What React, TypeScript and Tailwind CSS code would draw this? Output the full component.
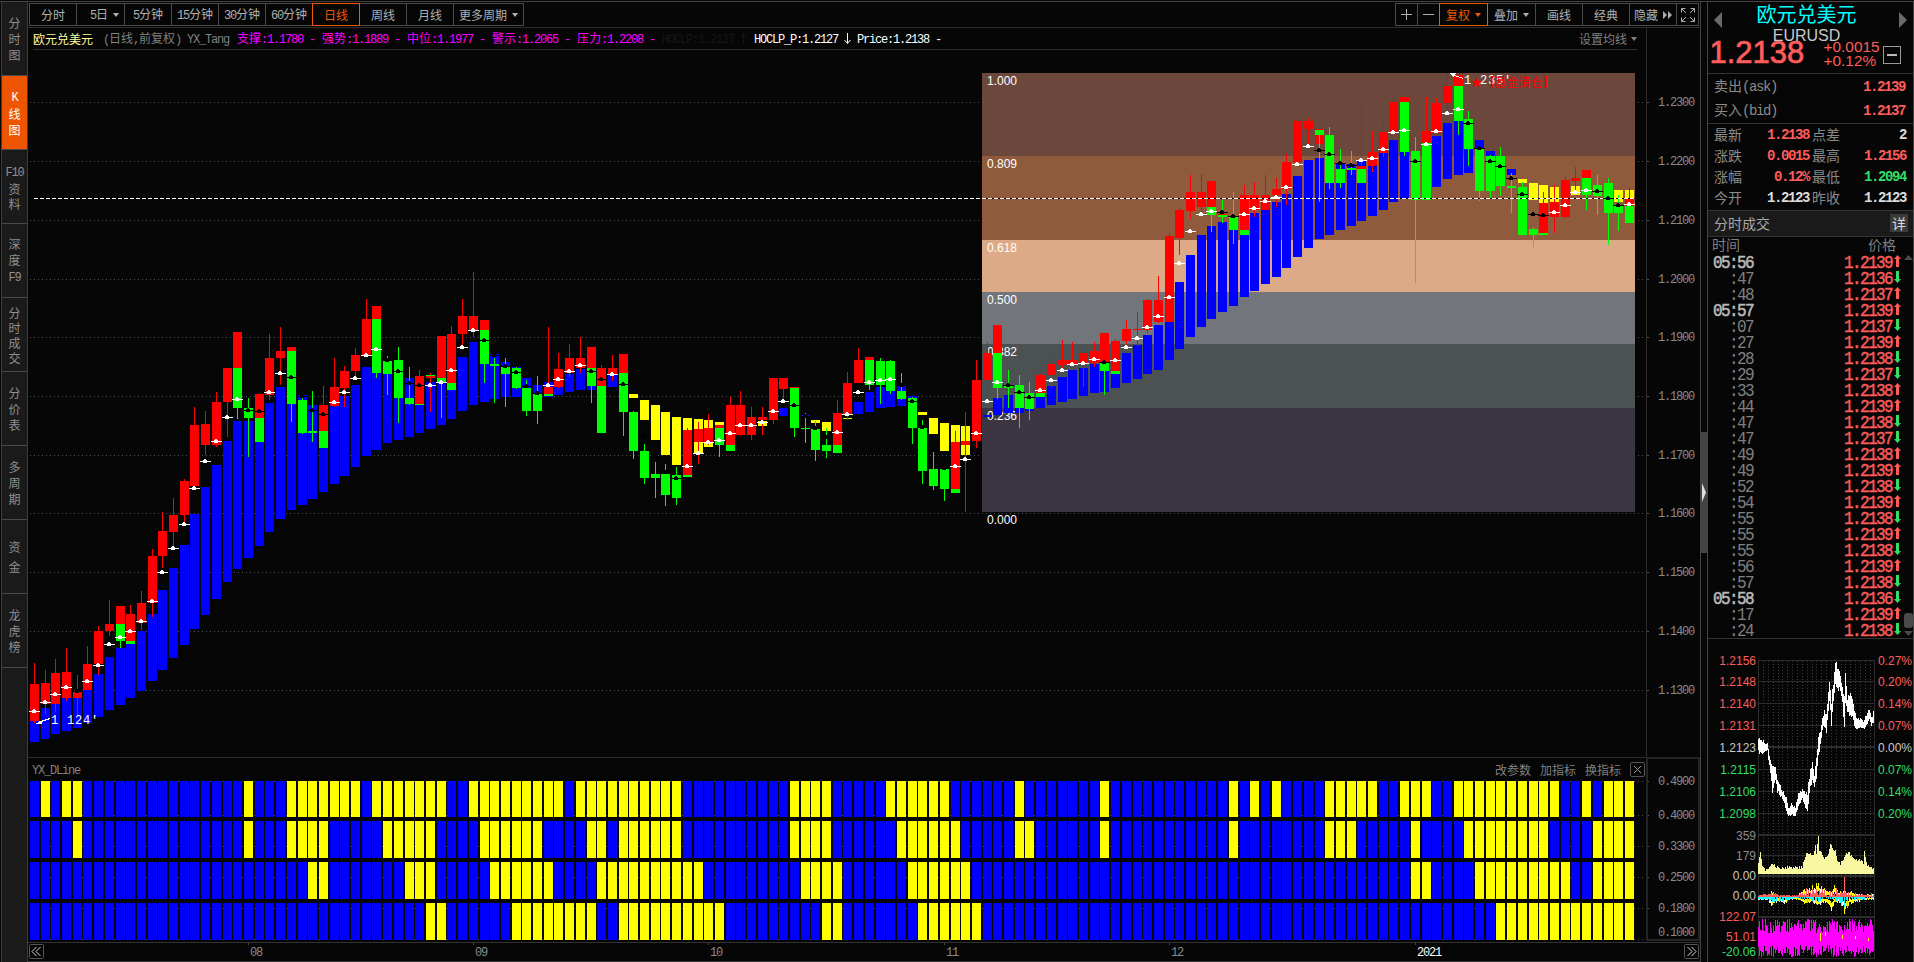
import type { ReactNode } from 'react'
import clsx from 'clsx'

// One string per candle. Upper-case R/G = wick, r/g = body, b/y = ribbon, w/k = average marker.
const CANDLES = `
b721,742 R663,723 r684,721 w711
b708,739 R670,714 r683,704 w702
b704,734 R659,712 r673,704 w694
b698,731 R648,701 r672,698 w687
b698,728 R675,716 r692,698 k691
b690,723 R646,690 r664,690 w681
b674,717 R626,675 r631,664 w665
b657,710 R600,636 r624,631 w644
b648,705 G641,648 r606,624 g624,641 w637
b644,698 R605,641 r614,641 g641,644 w631
b631,691 R591,630 r603,623 w621
b614,681 R549,617 r556,603 w601
b590,670 R512,568 r531,556 w572
b568,658 R498,547 r515,532 w548
b545,645 R479,522 r481,515 w524
b514,629 R407,488 r425,486 w488
b487,615 R411,455 r424,445 w461
b465,599 R392,447 r402,445 w441
b441,582 R368,437 r368,402 w417
b421,569 G408,419 r332,368 g368,408 w399
b421,558 G398,457 g408,418 k410
b442,546 R393,418 r394,418 g418,442 k411
b403,532 R334,400 r358,395 w392
b387,519 R327,385 r351,358 w373
b404,510 G404,422 r347,351 g351,404 k377
b395,505 G398,434 g400,433 k396
b405,499 G391,442 g431,433 k410
b448,492 R386,431 r405,431 g431,448 k414
b406,484 R358,407 r387,406 w402
b396,476 R366,407 r371,388 w392
b385,467 R348,377 r355,371 w378
b367,456 R299,355 r319,355 w355
b373,450 G373,378 r306,319 g319,373 w349
b374,443 G356,395 g361,374 k360
b398,440 G347,423 g360,398 k371
b378,437 G367,405 g398,404 k383
b405,433 R370,404 r376,404 g404,405 k385
b382,429 R373,412 g375,376 r376,378 w385
b382,425 G382,418 r336,378 g378,382 w382
b390,419 R326,383 r334,383 g383,390 w370
b357,411 R299,346 r316,334 w347
b342,405 R272,337 r316,330 w330
b364,402 G364,383 r320,330 g330,364 k340
b354,399 G358,403 g364,366 k355
b362,397 G358,407 g367,374 k366
b367,397 G367,389 g368,388 k372
b378,388 G380,416 g388,411 k386
b385,394 G376,424 g394,411 k393
b382,397 R327,394 r387,394 g394,396 w385
b387,395 R353,388 r369,387 w379
b374,392 R344,377 r358,373 w371
b369,390 R337,373 r358,368 w365
b386,390 G386,403 r347,368 g368,386 k371
R365,386 r368,386 g386,433 k379
b374,387 R355,381 r368,374 w374
G412,436 r354,373 g373,412 k384
y394,398 G410,459 g412,451 k409
y400,420 G444,484 g451,478 k436
y405,440 G462,498 g474,478 k457
y412,455 G464,506 g474,495 k472
y417,465 G467,505 g475,498 k478
y418,430 R428,475 r430,475 g475,477 w466
y419,453 R422,464 r429,442 w453
y420,447 R414,445 r428,442 w442
y422,425 G445,457 r425,428 g428,445 w440
R397,445 r405,445 g445,451 w433
R391,436 r405,435 w425
R407,440 r417,435 w425
y421,426 R407,435 r417,420 w422
R378,424 r378,420 w411
b408,416 R378,403 r378,389 w401
G428,437 r387,388 g388,428 k405
b415,417 G413,443 g428,429 k416
y420,423 G421,461 g429,450 k428
y422,431 G428,458 g445,451 k437
R400,445 r413,445 g445,453 w432
y418,419 R372,420 r383,414 w414
b402,414 R348,383 r360,383 w392
b392,412 G385,390 r357,360 g360,385 w382
b387,408 G358,404 g361,385 w380
b391,407 G360,394 g361,391 w379
b386,406 G373,400 g391,399 k385
b396,398 G397,444 g398,428 k401
y412,415 G420,484 g428,471 k427
y418,434 G452,490 g469,486 k450
y423,451 G469,501 g469,489 k468
y425,442 R431,489 r442,489 g489,493 w466
y426,455 R412,512 r441,445 w459
R360,448 r380,441 w433
b415,417 R342,400 r353,380 w401
b398,415 G388,399 r325,353 g353,388 w382
b395,413 G370,408 g386,388 k385
b408,413 G375,428 g385,408 k392
b409,411 G382,420 g393,409 k397
b397,408 R374,393 r375,393 g393,397 w390
b386,405 R356,388 r364,375 w380
b377,402 R340,368 r360,365 w370
b370,399 R342,366 r360,364 w364
b368,396 R347,387 r353,363 w363
b364,393 R342,367 r351,363 w359
b371,392 G371,395 r333,363 g363,371 k362
b374,388 R339,371 r341,371 g371,374 w360
b353,383 R320,345 r329,341 w347
b345,379 R312,346 r329,330 w338
b335,374 R299,333 r300,330 w327
b325,370 R276,323 r300,322 w316
b322,360 R233,322 r236,322 w297
b282,349 R208,255 r210,238 w263
b255,337 R175,219 r192,211 w231
b235,327 R174,212 r192,207 w214
b226,319 G215,232 r181,207 g207,215 w211
b222,312 G200,223 r214,215 g215,217 k212
b230,306 G192,244 g216,230 k216
b235,297 R185,230 r195,230 g230,235 w214
b213,291 R182,217 r195,210 w208
b210,284 R175,210 r195,210 w201
b202,277 R178,207 r189,195 w197
b194,268 R154,205 r162,189 w187
b176,257 R118,167 r121,162 w164
b160,248 R118,144 r121,129 w146
b158,239 r129,144 g130,135 G135,202 k150
b183,235 G127,189 g135,183 k154
b163,230 G149,188 g169,183 k163
b164,226 G151,175 g168,170 k165
b161,221 R103,166 r166,169 g169,183 w160
b166,216 R131,172 r152,166 w158
b153,210 R116,157 r132,153 w149
b140,202 R97,132 r102,132 w132
b152,198 G152,156 r97,102 g102,152 w130
G137,283 g151,200 k161
R97,143 r131,143 g143,200 w144
b136,187 R98,133 r103,133 w131
b123,179 R73,121 r86,103 w113
b121,175 G121,135 r75,86 g86,121 w109
b149,173 G111,166 g119,149 k123
b140,148 G148,201 g148,191 k148
b151,156 G155,198 g156,191 k161
G147,196 g156,186 k166
b169,175 G173,213 g186,188 k178
y179,183 G182,235 g187,235 k194
y183,200 G227,247 g229,235 k214
y185,203 R192,233 r203,233 g233,235 k215
y187,202 R185,233 r202,217 w212
R177,218 r180,217 w205
y186,195 R167,192 r178,181 w192
G195,210 r170,178 g178,195 w190
G175,215 g185,196 k191
G178,245 g183,213 k198
y190,202 G195,231 g206,213 k205
y190,198 R187,198 r198,206 g206,223 w204`
  .trim()
  .split('\n')

const FILL: Record<string, string> = {
  b: '#0000ff',
  y: '#ffff00',
  r: '#ff0000',
  g: '#00ff00',
  R: '#ff0000',
  G: '#00ff00',
  w: '#ffffff',
  k: '#000000',
}

const barX = (i: number) => Math.round(29.9 + i * 10.705)

const FIB = [
  { level: '1.000', y: 73, h: 83, fill: '#6b473c' },
  { level: '0.809', y: 156, h: 84, fill: '#8f5b3c' },
  { level: '0.618', y: 240, h: 52, fill: '#ddaa88' },
  { level: '0.500', y: 292, h: 52, fill: '#72767b' },
  { level: '0.382', y: 344, h: 64, fill: '#4c5252' },
  { level: '0.236', y: 408, h: 104, fill: '#3c3542' },
  { level: '0.000', y: 512, h: 0, fill: 'none' },
]

const PRICE_AXIS: [string, number][] = [
  ['1.2300', 102],
  ['1.2200', 161],
  ['1.2100', 220],
  ['1.2000', 279],
  ['1.1900', 337],
  ['1.1800', 396],
  ['1.1700', 455],
  ['1.1600', 513],
  ['1.1500', 572],
  ['1.1400', 631],
  ['1.1300', 690],
]

const LOWER_AXIS: [string, number, number][] = [
  ['0.4900', 781, 781],
  ['0.4000', 815, 815],
  ['0.3300', 846, 846],
  ['0.2500', 877, 877],
  ['0.1800', 908, 908],
  ['0.1000', 939, 932],
]

// Yellow runs of each strip; every other bar is blue.
const STRIPS = [
  {
    y: 781,
    h: 36,
    runs: '1 3-4 20 24-30 32-38 41-49 51-60 71-74 80-85 92 100 112 114 116 121-125 128-130 133-142 145 147-149',
  },
  {
    y: 821,
    h: 37,
    runs: '4 20 24-27 33-37 42-47 52-53 55-60 71-74 81-86 92-93 100 112 121-123 129 134-141 146-149',
  },
  { y: 862, h: 37, runs: '26-27 35-37 43-48 53-62 72-75 82-87 129-130 135-143 146-149' },
  { y: 903, h: 37, runs: '37-38 45-52 55-64 74-75 83-88 137-149' },
]

const MONTHS: [string, number][] = [
  ['08', 248],
  ['09', 473],
  ['10', 708],
  ['11', 944],
  ['12', 1169],
  ['2021', 1415],
]

const SIDE_TABS = ['分 时 图', 'K 线 图', 'F10 资 料', '深 度 F9', '分 时 成 交', '分 价 表', '多 周 期', '资 金', '龙 虎 榜']

const TICKS: [string, string, 1 | 0][] = [
  ['05:56', '1.2139', 1],
  [':47', '1.2136', 0],
  [':48', '1.2137', 1],
  ['05:57', '1.2139', 1],
  [':07', '1.2137', 0],
  [':27', '1.2139', 1],
  [':28', '1.2138', 0],
  [':29', '1.2137', 0],
  [':33', '1.2138', 1],
  [':44', '1.2139', 1],
  [':47', '1.2138', 0],
  [':47', '1.2137', 0],
  [':49', '1.2138', 1],
  [':49', '1.2139', 1],
  [':52', '1.2138', 0],
  [':54', '1.2139', 1],
  [':55', '1.2138', 0],
  [':55', '1.2139', 1],
  [':55', '1.2138', 0],
  [':56', '1.2139', 1],
  [':57', '1.2138', 0],
  ['05:58', '1.2136', 0],
  [':17', '1.2139', 1],
  [':24', '1.2138', 0],
]

// Half-width latin next to full-width hanzi: every ascii glyph advances half an em.
function Txt({ children }: { children: string }) {
  return (
    <>
      {children.split(/([\x20-\x7e]+)/).map((part, i) =>
        i % 2 ? (
          <span key={i} className="font-['Liberation_Mono',monospace] tracking-[-0.1em] whitespace-pre">
            {part}
          </span>
        ) : (
          part
        ),
      )}
    </>
  )
}

function Caret() {
  return (
    <svg width="6" height="4" viewBox="0 0 6 4" className="shrink-0">
      <path d="M0 0h6L3 4z" fill="currentColor" />
    </svg>
  )
}

interface ToolButtonProps {
  width: string
  active?: boolean
  children: ReactNode
}

function ToolButton({ width, active, children }: ToolButtonProps) {
  return (
    <button
      className={clsx(
        'flex h-[23px] shrink-0 items-center justify-center gap-[5px] border text-[12px] leading-none',
        width,
        active ? 'relative border-[#f05a00] text-[#f05a00]' : 'border-[#4a4a4a] text-[#b0b0b0]',
      )}
    >
      {children}
    </button>
  )
}

function Toolbar() {
  return (
    <div className="flex h-[26px] justify-between border-b border-[#2c2c2c] pt-px pr-px pl-px">
      <div className="flex -space-x-px">
        <ToolButton width="w-[48px]">分时</ToolButton>
        <ToolButton width="w-[49px] pl-2">
          <span>
            <Txt>5日</Txt>
          </span>
          <Caret />
        </ToolButton>
        <ToolButton width="w-[48px]">
          <span>
            <Txt>5分钟</Txt>
          </span>
        </ToolButton>
        <ToolButton width="w-[48px]">
          <span>
            <Txt>15分钟</Txt>
          </span>
        </ToolButton>
        <ToolButton width="w-[48px]">
          <span>
            <Txt>30分钟</Txt>
          </span>
        </ToolButton>
        <ToolButton width="w-[48px]">
          <span>
            <Txt>60分钟</Txt>
          </span>
        </ToolButton>
        <ToolButton width="w-[48px]" active>
          日线
        </ToolButton>
        <ToolButton width="w-[48px]">周线</ToolButton>
        <ToolButton width="w-[48px]">月线</ToolButton>
        <ToolButton width="w-[71px]">
          更多周期
          <Caret />
        </ToolButton>
      </div>
      <div className="flex -space-x-px">
        <ToolButton width="w-[23px]">
          <svg width="11" height="11" viewBox="0 0 11 11">
            <path d="M5.5 0v11M0 5.5h11" stroke="currentColor" />
          </svg>
        </ToolButton>
        <ToolButton width="w-[23px]">
          <svg width="11" height="11" viewBox="0 0 11 11">
            <path d="M0 5.5h11" stroke="currentColor" />
          </svg>
        </ToolButton>
        <ToolButton width="w-[49px]" active>
          复权
          <Caret />
        </ToolButton>
        <ToolButton width="w-[49px]">
          叠加
          <Caret />
        </ToolButton>
        <ToolButton width="w-[48px]">画线</ToolButton>
        <ToolButton width="w-[48px]">经典</ToolButton>
        <ToolButton width="w-[48px]">
          隐藏
          <svg width="9" height="8" viewBox="0 0 9 8">
            <path d="M0 0l4 4-4 4zM5 0l4 4-4 4z" fill="currentColor" />
          </svg>
        </ToolButton>
        <ToolButton width="w-[23px]">
          <svg width="14" height="14" viewBox="0 0 14 14">
            <path
              d="M.5 4.500v-4h4M9.500.5h4v4M13.500 9.500v4h-4M4.500 13.500h-4v-4M1 1l4 4M13 1L9 5M13 13L9 9M1 13l4-4"
              fill="none"
              stroke="currentColor"
            />
          </svg>
        </ToolButton>
      </div>
    </div>
  )
}

function Legend() {
  return (
    <div className="flex h-[22px] text-[12px] leading-none whitespace-pre">
      <div className="mr-[9px] ml-[5px] flex flex-1 items-center border-b border-[#2c2c2c]">
        <span className="w-[70px] text-[#ffffa0]">欧元兑美元</span>
        <span className="w-[84px] text-[#808080]">
          <Txt>(日线,前复权)</Txt>
        </span>
        <span className="w-[50px] text-[#808080]">
          <Txt>YX_Tang</Txt>
        </span>
        {['支撑:1.1780 -', '强势:1.1889 -', '中位:1.1977 -', '警示:1.2065 -', '压力:1.2208 -'].map((item) => (
          <span key={item} className="w-[85px] text-[#ff00ff]">
            <Txt>{item}</Txt>
          </span>
        ))}
        <span className="flex w-[92px] items-center gap-[6px] text-[#161616]">
          <span>
            <Txt>HOCLP:1.2127</Txt>
          </span>
          <svg width="7" height="11" viewBox="0 0 7 11">
            <path d="M3.500 11V1M.5 4l3-3.500L6.500 4" fill="none" stroke="currentColor" />
          </svg>
        </span>
        <span className="flex items-center gap-[6px] text-white">
          <span>
            <Txt>HOCLP_P:1.2127</Txt>
          </span>
          <svg width="7" height="11" viewBox="0 0 7 11">
            <path d="M3.500 0v10M.5 7l3 3.500L6.500 7" fill="none" stroke="currentColor" />
          </svg>
          <span>
            <Txt>Price:1.2138 -</Txt>
          </span>
        </span>
        <span className="ml-auto flex items-center gap-[4px] text-[#808080]">
          设置均线
          <Caret />
        </span>
      </div>
      <div className="w-[54px] border-l border-[#2c2c2c]" />
    </div>
  )
}

function GridRow({ y, from }: { y: number; from: number }) {
  return (
    <>
      <path d={`M${from} ${y + 0.5}H1645`} stroke="#505050" strokeDasharray="1 3" />
      <path d={`M1646 ${y + 0.5}h3`} stroke="#505050" />
    </>
  )
}

function AxisText({ y, children }: { y: number; children: string }) {
  return (
    <text
      x={1658}
      y={y + 4}
      fontSize={12}
      fill="#8a8a8a"
      className="font-['Liberation_Mono',monospace] tracking-[-1.2px]"
    >
      {children}
    </text>
  )
}

function Marker({ x, y, fill }: { x: number; y: number; fill: string }) {
  return (
    <g fill={fill}>
      <rect x={x - 1} y={y} width={11} height={1} />
      <rect x={x + 2} y={y - 1} width={4} height={3} />
      <rect x={x + 3} y={y - 2} width={2} height={4} />
    </g>
  )
}

function CandleChart() {
  const parsed = CANDLES.map((row) =>
    row.split(' ').map((token) => {
      const [a, b] = token.slice(1).split(',').map(Number)
      return { kind: token[0], a, b }
    }),
  )

  return (
    <svg width="1672" height="707" viewBox="28 50 1672 707" className="block" shapeRendering="crispEdges">
      {PRICE_AXIS.map(([label, y]) => (
        <g key={label}>
          <GridRow y={y} from={30} />
          <AxisText y={y}>{label}</AxisText>
        </g>
      ))}
      <path d="M1646.500 50V757" stroke="#2c2c2c" />
      {FIB.map((band) => (
        <rect key={band.level} x={982} y={band.y} width={653} height={band.h} fill={band.fill} />
      ))}
      {FIB.map((band) => (
        <text
          key={band.level}
          x={987}
          y={band.y + 12}
          fontSize={12}
          fill="#ffffff"
          className="font-['Liberation_Sans',sans-serif]"
        >
          {band.level}
        </text>
      ))}
      {parsed.map((shapes, i) =>
        shapes.map(({ kind, a, b }) => {
          if (kind === 'w' || kind === 'k') return null
          const wick = kind === 'R' || kind === 'G'
          return (
            <rect
              key={`${i}-${kind}`}
              x={barX(i) + (wick ? 4 : 0)}
              y={a}
              width={wick ? 1 : 9}
              height={b - a}
              fill={FILL[kind]}
            />
          )
        }),
      )}
      <path d="M982 198.500H1635" stroke="#000000" />
      <path d="M34 198.500H1635" stroke="#ffffff" strokeDasharray="4 2" />
      {parsed.map((shapes, i) =>
        shapes
          .filter(({ kind }) => kind === 'w' || kind === 'k')
          .map(({ kind, a }) => <Marker key={i} x={barX(i)} y={a} fill={FILL[kind]} />),
      )}
      <g stroke="#ffffff" fill="#ffffff">
        <path d="M38 722.500L50 718.500" fill="none" />
        <path d="M36 723.500l6-3v3z" stroke="none" />
        <path d="M1452 74.500L1463 78.500" fill="none" />
        <path d="M1449 73h7l-2 4z" stroke="none" />
      </g>
      <g fontSize={12} fill="#ffffff" className="font-['Liberation_Mono',monospace] tracking-[0.8px]">
        <text x={51} y={724}>
          1 124'
        </text>
        <text x={1464} y={84}>
          1 235'
        </text>
      </g>
      <text x={1471} y={87} fontSize={12} fill="#ff0000" className="font-['Noto_Sans_CJK_SC',sans-serif]">
        ★【基金清仓】
      </text>
    </svg>
  )
}

function isInRuns(runs: string, i: number) {
  return runs.split(' ').some((run) => {
    const [from, to = from] = run.split('-').map(Number)
    return i >= from && i <= to
  })
}

function StripChart() {
  return (
    <svg
      width="1672"
      height="161"
      viewBox="28 781 1672 161"
      className="block overflow-visible"
      shapeRendering="crispEdges"
    >
      {LOWER_AXIS.map(([label, gridY, labelY]) => (
        <g key={label}>
          <GridRow y={gridY} from={30} />
          <AxisText y={labelY}>{label}</AxisText>
        </g>
      ))}
      {STRIPS.map((strip) =>
        CANDLES.map((_, i) => (
          <rect
            key={`${strip.y}-${i}`}
            x={barX(i)}
            y={strip.y}
            width={9}
            height={strip.h}
            fill={isInRuns(strip.runs, i) ? FILL.y : FILL.b}
          />
        )),
      )}
      <path d="M1647 781V940H1699V781" fill="none" stroke="#242424" strokeWidth="2" />
    </svg>
  )
}

function LowerPanel() {
  return (
    <div className="h-[185px]">
      <div className="flex h-[24px] text-[12px] leading-none text-[#808080]">
        <div className="flex w-[1618px] items-center border-t border-[#2c2c2c] pl-[4px]">
          <span>
            <Txt>YX_DLine</Txt>
          </span>
          <div className="mr-[9px] ml-auto flex gap-[9px]">
            <span>改参数</span>
            <span>加指标</span>
            <span>换指标</span>
          </div>
          <svg width="15" height="15" viewBox="0 0 15 15" className="mr-px">
            <rect x=".5" y=".5" width="14" height="14" rx="1.500" fill="none" stroke="#555555" />
            <path d="M4 4l7 7M11 4l-7 7" stroke="#999999" />
          </svg>
        </div>
        <div className="w-[54px] border-x-2 border-t-2 border-[#242424]" />
      </div>
      <StripChart />
    </div>
  )
}

function PageButton({ d }: { d: string }) {
  return (
    <svg width="15" height="15" viewBox="0 0 15 15" className="mt-px shrink-0">
      <rect x=".5" y=".5" width="14" height="14" rx="1" fill="none" stroke="#555555" />
      <path d={d} fill="none" stroke="#d8d8d8" />
    </svg>
  )
}

function TimeAxis() {
  return (
    <div className="flex h-[20px] justify-between border-y border-[#333333] px-px">
      <PageButton d="M7.500 3L3 7.500 7.500 12M11.500 3L7 7.500l4.500 4.500" />
      <svg width="1640" height="18" viewBox="44 943 1640 18">
        {MONTHS.map(([label, x]) => (
          <g key={label}>
            <path d={`M${x + 0.5} 942v3`} stroke="#444444" />
            <text
              x={x + 2}
              y={956}
              fontSize={12}
              fill={label === '2021' ? '#ffffff' : '#8a8a8a'}
              className="font-['Liberation_Mono',monospace] tracking-[-1.2px]"
            >
              {label}
            </text>
          </g>
        ))}
      </svg>
      <PageButton d="M3.500 3L8 7.500 3.500 12M7.500 3L12 7.500 7.500 12" />
    </div>
  )
}

function QuoteHeader() {
  return (
    <div className="flex h-[72px] justify-between border-b border-[#333333] px-[6px] font-['Liberation_Sans',sans-serif]">
      <svg width="8" height="16" viewBox="0 0 8 16" className="mt-[10px] shrink-0">
        <path d="M8 0v16L0 8z" fill="#6a6a6a" />
      </svg>
      <div className="-ml-[14px] flex w-[192px] flex-col">
        <div className="h-[25px] pr-[8px] text-center font-['Noto_Sans_CJK_SC',sans-serif] text-[20px] leading-[24px] text-[#00ffff]">
          欧元兑美元
        </div>
        <div className="h-[16px] pr-[8px] text-center text-[16px] leading-[17px] text-[#c8c8c8]">EURUSD</div>
        <div className="-mt-[4px] -ml-[5px] flex h-[28px] text-[#ff5c5c]">
          <span className="w-[114px] text-[31px] leading-[28px] [-webkit-text-stroke:0.7px]">1.2138</span>
          <span className="flex w-[59px] flex-col text-[15.4px] leading-[14px]">
            <span className="mt-px">+0.0015</span>
            <span>+0.12%</span>
          </span>
          <svg width="18" height="18" viewBox="0 0 18 18" className="mt-[7px] shrink-0">
            <rect x=".5" y=".5" width="17" height="17" fill="none" stroke="#999999" />
            <path d="M4 9h10" stroke="#bbbbbb" strokeWidth="2" />
          </svg>
        </div>
      </div>
      <svg width="8" height="16" viewBox="0 0 8 16" className="mt-[10px] -ml-[14px] shrink-0">
        <path d="M0 0v16l8-8z" fill="#6a6a6a" />
      </svg>
    </div>
  )
}

const RED = 'text-[#ff5c5c]'
const GREEN = 'text-[#33dd66]'
const WHITE = 'text-[#dcdcdc]'

const STATS: [string, string, string, string, string, string][] = [
  ['最新', '1.2138', RED, '点差', '2', WHITE],
  ['涨跌', '0.0015', RED, '最高', '1.2156', RED],
  ['涨幅', '0.12%', RED, '最低', '1.2094', GREEN],
  ['今开', '1.2123', WHITE, '昨收', '1.2123', WHITE],
]

function QuoteStats() {
  return (
    <div className="text-[14px] leading-none text-[#8a8a8a]">
      <div className="h-[50px] border-b border-[#333333] pr-[8px] pl-[6px]">
        {[
          ['卖出(ask)', '1.2139'],
          ['买入(bid)', '1.2137'],
        ].map(([label, value]) => (
          <div key={label} className="flex h-[24px] items-center justify-between">
            <span>
              <Txt>{label}</Txt>
            </span>
            <span className="font-bold text-[#ff5c5c]">
              <Txt>{value}</Txt>
            </span>
          </div>
        ))}
      </div>
      <div className="flow-root h-[87px] border-b border-[#333333] pl-[6px]">
        {STATS.map(([a, av, ac, b, bv, bc]) => (
          <div key={a} className="-mt-px mb-px flex h-[21px] items-center">
            <span>{a}</span>
            <span className={clsx('w-[67px] text-right font-bold', ac)}>
              <Txt>{av}</Txt>
            </span>
            <span className="pl-[3px]">{b}</span>
            <span className={clsx('w-[66px] text-right font-bold', bc)}>
              <Txt>{bv}</Txt>
            </span>
          </div>
        ))}
      </div>
    </div>
  )
}

function TickList() {
  return (
    <div className="h-[428px] border-b border-[#333333]">
      <div className="flex h-[26px] items-center justify-between border-b border-[#333333] bg-[#1a1a1a] pr-[5px] pb-px pl-[6px] text-[14px] leading-none text-[#a8a8a8]">
        分时成交
        <span className="flex size-[18px] items-center justify-center bg-[#3a3a3a] text-[#d8d8d8]">详</span>
      </div>
      <div className="flex h-[17px] items-center justify-between pr-[17px] pb-[3px] pl-[4px] text-[14px] leading-none text-[#808080]">
        <span>时间</span>
        <span>价格</span>
      </div>
      <div className="-mt-px flex">
        <div className="flex-1 text-[16px] leading-[16px]">
          {TICKS.map(([time, price, up], i) => (
            <div key={i} className="flex h-[16px] items-center">
              <span
                className={clsx(
                  'inline-block w-[45px] scale-y-110 text-right',
                  time.length > 3 ? 'text-[#b8b8b8] [-webkit-text-stroke:0.5px]' : 'text-[#808080]',
                )}
              >
                <Txt>{time}</Txt>
              </span>
              <span className="ml-auto inline-block scale-y-110 text-[#ff5c5c] [-webkit-text-stroke:0.4px]">
                <Txt>{price}</Txt>
              </span>
              <svg width="7" height="12" viewBox="0 0 7 12" className={clsx('ml-[2px]', up ? RED : GREEN)}>
                <path
                  d={up ? 'M3.500 0L7 4H5v8H2V4H0z' : 'M3.500 12L0 8h2V0h3v8h2z'}
                  fill="currentColor"
                />
              </svg>
            </div>
          ))}
        </div>
        <div className="ml-[2px] flex w-[10px] flex-col items-center pt-[2px] text-[#4a4a4a]">
          <svg width="9" height="5" viewBox="0 0 9 5">
            <path d="M0 5h9L4.500 0z" fill="currentColor" />
          </svg>
          <div className="mt-[353px] h-[15px] w-[9px] rounded-[3px] bg-[#4a4a4a]" />
          <svg width="9" height="5" viewBox="0 0 9 5" className="mt-[3px]">
            <path d="M0 0h9L4.500 5z" fill="currentColor" />
          </svg>
        </div>
      </div>
    </div>
  )
}

// Envelope keys: x, high, low, all in panel pixels.
const INTRADAY = [
  [1758, 736, 755], [1764, 740, 753], [1767, 742, 753], [1769, 753, 767], [1772, 763, 797], [1775, 765, 780],
  [1777, 777, 793], [1782, 790, 800], [1785, 793, 810], [1788, 806, 818], [1791, 802, 815], [1795, 806, 817],
  [1798, 793, 807], [1802, 787, 800], [1805, 793, 808], [1807, 790, 812], [1809, 773, 797], [1812, 760, 780],
  [1814, 773, 787], [1816, 755, 785], [1818, 735, 760], [1820, 730, 745], [1822, 717, 733], [1824, 708, 727],
  [1826, 713, 737], [1828, 692, 713], [1829, 682, 703], [1831, 697, 730], [1833, 680, 707], [1835, 662, 690],
  [1837, 662, 690], [1839, 667, 693], [1841, 680, 700], [1842, 683, 703], [1844, 690, 737], [1845, 668, 707],
  [1847, 697, 713], [1849, 690, 717], [1852, 697, 718], [1854, 710, 728], [1857, 718, 733], [1860, 717, 728],
  [1863, 720, 730], [1867, 710, 725], [1869, 708, 720], [1871, 717, 727], [1874, 708, 725],
]

const VOLUME = [
  [1758, 863], [1760, 850], [1762, 865], [1765, 870], [1772, 863], [1777, 867], [1790, 867], [1802, 867],
  [1803, 862], [1806, 853], [1813, 855], [1815, 845], [1816, 853], [1818, 836], [1819, 852], [1822, 853],
  [1823, 858], [1827, 857], [1830, 843], [1832, 847], [1835, 850], [1837, 860], [1840, 863], [1843, 860],
  [1845, 855], [1848, 852], [1853, 857], [1860, 860], [1863, 862], [1864, 852], [1866, 863], [1870, 867], [1874, 869],
]

const FLOW = [
  [1758, 2, 2], [1768, 3, 2], [1771, 7, 12], [1775, 6, 6], [1779, 1, 4], [1784, 2, 6], [1790, 1, 2], [1797, 2, 2],
  [1802, 7, 5], [1807, 10, 7], [1812, 12, 6], [1818, 16, 9], [1821, 14, 7], [1824, 9, 5], [1828, 8, 8],
  [1831, 9, 13], [1835, 14, 5], [1838, 6, 5], [1842, 6, 9], [1844, 8, 20], [1846, 6, 12], [1850, 6, 7],
  [1856, 4, 5], [1864, 2, 2], [1874, 4, 2],
]

function sample(keys: number[][], x: number, column: number) {
  const next = keys.findIndex((key) => key[0] >= x)
  if (next <= 0) return keys[0][column]
  const [a, b] = [keys[next - 1], keys[next]]
  const t = (x - a[0]) / (b[0] - a[0])
  return a[column] + (b[column] - a[column]) * t
}

function noise(n: number) {
  const v = Math.sin(n * 127.1) * 43758.5453
  return v - Math.floor(v)
}

const MINI_LABELS: [string, number, string, string?][] = [
  ['1.2156', 661, '#ff5c5c', '0.27%'],
  ['1.2148', 682, '#ff5c5c', '0.20%'],
  ['1.2140', 704, '#ff5c5c', '0.14%'],
  ['1.2131', 726, '#ff5c5c', '0.07%'],
  ['1.2123', 748, '#c8c8c8', '0.00%'],
  ['1.2115', 770, '#33dd66', '0.07%'],
  ['1.2106', 792, '#33dd66', '0.14%'],
  ['1.2098', 814, '#33dd66', '0.20%'],
  ['359', 836, '#8a8a8a'],
  ['179', 856, '#8a8a8a'],
  ['0.00', 876, '#c8c8c8'],
  ['0.00', 896, '#c8c8c8'],
  ['122.07', 917, '#ff5c5c'],
  ['51.01', 937, '#ff5c5c'],
  ['-20.06', 952, '#33dd66'],
]

function MiniChart() {
  const columns = Array.from({ length: 116 }, (_, i) => 1758 + i)

  return (
    <svg width="205" height="323" viewBox="1708 639 205 323" className="block" shapeRendering="crispEdges">
      {Array.from({ length: 23 }, (_, i) => (
        <path
          key={i}
          d={`M${Math.round(1763 + i * 4.85) + 0.5} 661V958`}
          stroke="#3a3a3a"
          strokeDasharray="1 2"
        />
      ))}
      <g stroke="#2c2c2c" fill="none">
        <rect x={1758.5} y={660.5} width={116} height={298} />
        <path d="M1758 681.500h116M1758 703.500h116M1758 725.500h116M1758 769.500h116M1758 791.500h116M1758 813.500h116M1758 855.500h116M1758 896.500h116" />
        <path d="M1758 747h116M1758 835h116M1758 876h116M1758 917h116" strokeWidth="2" />
      </g>
      {columns.map((x) => {
        const hi = sample(INTRADAY, x, 1)
        const lo = sample(INTRADAY, x, 2)
        const span = lo - hi
        const top = hi + span * noise(x) * 0.25
        return (
          <rect key={x} x={x} y={top} width={1} height={lo - span * noise(x + 500) * 0.25 - top} fill="#ffffff" />
        )
      })}
      {columns.map((x) => {
        const top = sample(VOLUME, x, 1) + noise(x + 9) * 3 - 1
        return <rect key={x} x={x} y={top} width={1} height={874 - top} fill="#f8f8a0" />
      })}
      {columns.map((x) => {
        const up = sample(FLOW, x, 1) * (0.5 + noise(x + 60) * 0.5)
        const down = sample(FLOW, x, 2) * (0.5 + noise(x + 80) * 0.5)
        const cap = noise(x) > 0.6 ? '#ffffff' : '#ffff00'
        return (
          <g key={x}>
            <rect x={x} y={897 - up} width={1} height={up * 0.5 + 1} fill={cap} />
            <rect x={x} y={897 + down * 0.5} width={1} height={down * 0.5 + 1} fill={cap} />
            <rect x={x} y={896 - up * noise(x + 1)} width={1} height={up * noise(x + 1) + 1} fill="#ff5c5c" />
            {noise(x + 5) > 0.2 && (
              <rect x={x} y={897} width={1} height={1 + down * noise(x + 2)} fill="#00ffff" />
            )}
          </g>
        )
      })}
      <rect x={1844} y={877} width={1} height={20} fill="#ff5c5c" />
      {columns.map((x) => {
        const top = 919 + noise(x + 21) * 14
        const bottom = 957 - noise(x + 37) * 12
        return <rect key={x} x={x} y={top} width={1} height={bottom - top} fill="#ff00ff" />
      })}
      <path d="M1820.500 933v8M1825.500 932v4M1842.500 935v4M1855.500 936v3M1868.500 938v3" stroke="#ffff00" />
      <g fontSize={12} className="font-['Liberation_Sans',sans-serif]">
        {MINI_LABELS.map(([left, y, fill, right], i) => (
          <g key={i} fill={fill}>
            <text x={1756} y={y + 4} textAnchor="end">
              {left}
            </text>
            {right && (
              <text x={1878} y={y + 4}>
                {right}
              </text>
            )}
          </g>
        ))}
      </g>
    </svg>
  )
}

export default function App() {
  return (
    <div className="h-[962px] w-[1914px] overflow-hidden bg-[#060606] pt-px font-['Noto_Sans_CJK_SC',sans-serif]">
      <div className="flex h-[961px] border-t border-[#444444]">
        <nav className="ml-px w-[27px] shrink-0 border-x border-[#3c3c3c] bg-[#1a1a1a]">
          {SIDE_TABS.map((tab, i) => (
            <div
              key={tab}
              className={clsx(
                'flex h-[74px] flex-col items-center justify-center border-b border-[#4a4a4a] text-[12px]',
                tab.length > 6 ? 'leading-[15px]' : tab.length < 4 ? 'leading-[20px]' : 'leading-[16px]',
                i === 1 ? 'bg-[#ee5500] text-white' : 'text-[#909090]',
              )}
            >
              {tab.split(' ').map((char) => (
                <span key={char}>
                  <Txt>{char}</Txt>
                </span>
              ))}
            </div>
          ))}
        </nav>

        <main className="w-[1673px] shrink-0 border-r border-[#444444]">
          <Toolbar />
          <Legend />
          <CandleChart />
          <LowerPanel />
          <TimeAxis />
        </main>

        <div className="w-[6px] shrink-0 pt-[430px]">
          <div className="flex h-[121px] items-center bg-[#444444] pl-px">
            <svg width="4" height="19" viewBox="0 0 4 19">
              <path d="M0 0l4 9.500L0 19z" fill="#e0e0e0" />
            </svg>
          </div>
        </div>

        <aside className="w-[207px] shrink-0 border-x border-[#444444]">
          <QuoteHeader />
          <QuoteStats />
          <TickList />
          <MiniChart />
        </aside>
      </div>
    </div>
  )
}
